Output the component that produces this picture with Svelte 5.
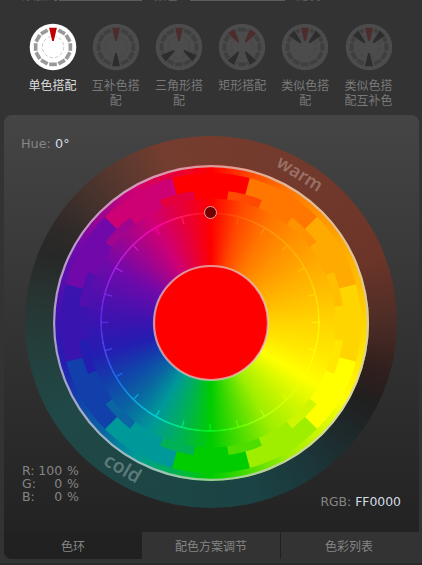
<script>
  const colors = ['#ff0000','#ff4900','#ff7600','#ff9200','#ffaa00','#ffbf00','#ffd500','#ffe700','#ffff00','#cdf600','#9fee00','#4fdd00','#00cc00','#00b156','#009999','#0a65a2','#1240ab','#241db1','#3914af','#530fad','#7109aa','#9f058e','#cd0074','#e5003c'];
  const bright = ['#ff1010','#ff5c00','#ff8c10','#ffa800','#ffc000','#ffd800','#ffee00','#fffa00','#ffff00','#d8ff00','#b8ff10','#60fa00','#00f420','#00e878','#00d0d0','#0ca0e0','#1f68ea','#4844e4','#5c28e0','#7c24e0','#a820e0','#cc18c4','#f800a8','#ff1860'];
  const r = (d) => (d * Math.PI) / 180;
  const pt = (rad, a) => `${(158 + rad * Math.sin(r(a))).toFixed(2)} ${(158 - rad * Math.cos(r(a))).toFixed(2)}`;
  const band = (a, half, r0, r1) => `M${pt(r1, a - half)} A${r1} ${r1} 0 0 1 ${pt(r1, a + half)} L${pt(r0, a + half)} A${r0} ${r0} 0 0 0 ${pt(r0, a - half)}Z`;
  const tick = (a) => `M${pt(101.5, a)} L${pt(109, a)}`;
  const conic = `conic-gradient(${[...colors, colors[0]].join(',')})`;
  const brightConic = `conic-gradient(${[...bright, bright[0]].join(',')})`;
  const modes = [
    { name: '单色搭配', red: [0], dark: [], active: true },
    { name: '互补色搭配', red: [0], dark: [180] },
    { name: '三角形搭配', red: [0], dark: [126, 234] },
    { name: '矩形搭配', red: [-35, 35], dark: [145, 215] },
    { name: '类似色搭配', red: [0], dark: [-44, 44] },
    { name: '类似色搭配互补色', red: [0], dark: [-44, 44, 180] }
  ];
  const tabs = ['色环', '配色方案调节', '色彩列表'];
</script>

<main>
  <div class="strip"><span class="a">添加到</span><i class="l1"></i><span class="b">颜色</span><i class="l2"></i><span class="c">随机</span></div>
  <nav>
    {#each modes as m}
      <div class="mode" class:active={m.active}>
        <svg width="48" height="48" viewBox="-24 -24 48 48">
          <circle r="23.3" class="disc" />
          {#each Array(12) as _, i}
            <rect x="-3.8" y="-19.2" width="7.6" height="3.7" class="seg" transform={`rotate(${i * 30})`} />
          {/each}
          <circle r="10.7" class="inner" />
          {#each [...m.red, ...m.dark] as a, i}
            <g transform={`rotate(${a})`}>
              <path d="M-5.3-20H5.3L1-5H-1Z" class="disc" />
              <path d="M-3.9-19.3H3.9L.8-6H-.8Z" class={i < m.red.length ? 'red' : 'dark'} />
            </g>
          {/each}
        </svg>
        <span>{m.name}</span>
      </div>
    {/each}
  </nav>
  <section>
    <div class="stage">
      <div class="hue">Hue: <b>0°</b></div>
      <div class="climate">
        <div class="wheel" style:background={conic}>
          <svg width="316" height="316">
            {#each colors as c, i}
              <path d={band(i * 15, 7.5, 124.5, 134)} fill={c} />
            {/each}
            {#each Array(12) as _, i}
              <path d={band(i * 30, 15, 133, 150)} fill={colors[i * 2]} />
            {/each}
            <g transform="translate(-.8 -.6)">
              {#each bright as c, i}
                {#if i}<path d={tick(i * 15)} stroke={c} stroke-width="1.3" />{/if}
              {/each}
            </g>
            <circle cx="158" cy="158" r="156.9" fill="none" stroke="#d2cccc" stroke-opacity=".75" stroke-width="2.2" />
            <circle cx="158" cy="158" r="57" fill="#f00" stroke="#e0cccc" stroke-opacity=".7" stroke-width="2.2" />
          </svg>
          <div class="orbit" style:background={brightConic}></div>
        </div>
        <div class="marker"></div>
        <span class="word warm">warm</span>
        <span class="word cold">cold</span>
      </div>
      <div class="rgb">
        <div><span>R:</span><span>100 %</span></div>
        <div><span>G:</span><span>0 %</span></div>
        <div><span>B:</span><span>0 %</span></div>
      </div>
      <div class="hex">RGB: <b>FF0000</b></div>
    </div>
    <footer>
      {#each tabs as t, i}
        <div class="tab" class:current={i === 0}>{t}</div>
      {/each}
    </footer>
  </section>
</main>

<style>
  :global(body) { background: #333; }
  main { width: 422px; height: 565px; overflow: hidden; background: #333; box-sizing: border-box; border-bottom: 2px solid #2c2b2c; font: 12px/15px "Noto Sans CJK SC", sans-serif; color: #858585; display: flex; flex-direction: column; }
  .strip { height: 23px; display: flex; padding-left: 22px; box-sizing: border-box; flex: none; color: #666; }
  .strip span { height: 15px; line-height: 15px; margin-top: -13px; white-space: nowrap; }
  .strip i { height: 1px; background: #5c5c5c; }
  .a { width: 37px; }
  .b { width: 36px; margin-left: 12px; }
  .c { width: 36px; margin-left: 11px; }
  .l1 { width: 83px; }
  .l2 { width: 95px; }
  nav { display: flex; height: 92px; flex: none; padding-left: 21px; box-sizing: border-box; }
  .mode { width: 63.2px; flex: none; display: flex; flex-direction: column; align-items: center; color: #797979; --disc: #4c4c4c; --seg: #3f3f3f; --red: #4c2c2c; --dark: #2d2d2d; }
  .mode.active { color: #ddd; --disc: #fff; --seg: #999; --red: #c00000; }
  .mode svg { flex: none; }
  .mode span { width: 49px; text-align: center; margin-top: 6px; word-break: break-all; }
  .disc { fill: var(--disc); }
  .seg { fill: var(--seg); }
  .red { fill: var(--red); }
  .dark { fill: var(--dark); }
  .inner { fill: none; stroke: var(--seg); stroke-opacity: .65; stroke-width: .8; stroke-dasharray: 3.5 2.1; }
  section { width: 415px; height: 444px; margin-left: 4px; border-radius: 8px; overflow: hidden; flex: none; display: flex; flex-direction: column; background: linear-gradient(#454545, #222 95%); }
  .stage { position: relative; height: 417px; padding: 21px 0 0 21px; box-sizing: border-box; font-family: "DejaVu Sans", sans-serif; font-size: 12.5px; }
  b { font-weight: 400; color: #d2dde4; }
  .hue { position: absolute; left: 17px; top: 21px; font-size: 12.8px; }
  .climate { position: relative; width: 372px; height: 372px; border-radius: 50%; padding: 29px 0 0 28px; box-sizing: border-box; background: conic-gradient(#753c2e 0deg, #70382b 45deg, #6d3529 68deg, #4c2c26 90deg, #301f1d 106deg, #201f1f 117deg, #1e292b 130deg, #1c3639 145deg, #1b4244 165deg, #1c4545 190deg, #204846 240deg, #243d3a 265deg, #283331 280deg, #262827 293deg, #302a28 303deg, #49332d 318deg, #613a2f 333deg, #753d2f 345deg, #753c2e 360deg); }
  .wheel { position: relative; width: 316px; height: 316px; border-radius: 50%; margin-left: -.2px; }
  .wheel svg { display: block; }
  .orbit { position: absolute; left: 47px; top: 47.4px; width: 220px; height: 220px; border-radius: 50%; mask: radial-gradient(circle, transparent 107.7px, #000 108.5px, #000 109.7px, transparent 110.5px); }
  .marker { position: absolute; left: 179px; top: 70px; width: 11px; height: 11px; border: 1.5px solid #e3a3a3; border-radius: 50%; background: #750000; }
  .word { position: absolute; font: 600 18px/24px "Noto Sans", sans-serif; color: rgba(255,255,255,.28); }
  .warm { left: 250px; top: 25px; transform: rotate(32deg); }
  .cold { left: 78px; top: 320px; transform: rotate(30deg); font-size: 19.5px; }
  .rgb { position: absolute; left: 18px; top: 349px; width: 57px; line-height: 13px; }
  .rgb div { display: flex; justify-content: space-between; white-space: pre; }
  .rgb span + span { word-spacing: 1px; }
  .hex { position: absolute; right: 18px; top: 379px; font-size: 12.4px; }
  footer { height: 27px; display: flex; background: #333; }
  .tab { width: 138px; flex: none; box-sizing: border-box; border-left: 1px solid #202020; text-align: center; line-height: 28px; padding-right: 1px; }
  .tab:nth-child(2) { border-left-color: #333; }
  .tab.current { background: #212121; }
</style>
